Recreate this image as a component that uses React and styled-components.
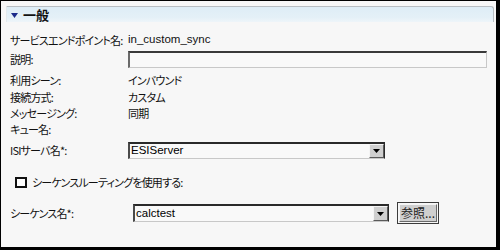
import React from "react";
import styled, { createGlobalStyle } from "styled-components";

const Global = createGlobalStyle`
  html, body { margin: 0; padding: 0; background: #f7f7f7; }
  body { font-family: "Noto Sans CJK JP", "Liberation Sans", sans-serif; }
  * { box-sizing: border-box; }
`;

const Frame = styled.div`
  width: 500px;
  height: 250px;
  background: #f7f7f7;
  border-style: solid;
  border-color: #000;
  border-width: 1px 4px 3px 1px;
  padding: 5px 2px 0 5px;
  display: flex;
  flex-direction: column;
  font-size: 11px;
  color: #111;
  font-feature-settings: "palt";
  line-height: 1;
`;

const Header = styled.div`
  height: 16px;
  display: flex;
  align-items: center;
  gap: 5px;
  padding-left: 4px;
  background: linear-gradient(#deedf6, #e4f0f7 70%, #eef5f9);
  border-top: 1px solid #b9bec2;
  border-right: 1px solid #b9bec2;
  border-left: 1px solid #e3e9ec;
  border-top-right-radius: 3px;
  font-weight: bold;
  font-size: 13px;
  color: #111;
`;

const Tri = styled.svg`
  width: 7px;
  height: 5px;
  display: block;
  margin-top: 1px;
`;

const Body = styled.div`
  display: flex;
  flex-direction: column;
  padding-left: 4px;
`;

const Row = styled.div`
  display: flex;
  align-items: center;
  height: ${(p) => p.$h || 16}px;
  margin-top: ${(p) => p.$mt || 0}px;
`;

const Label = styled.div`
  width: ${(p) => p.$w || 118}px;
  flex: none;
  white-space: nowrap;
  letter-spacing: -0.8px;
`;

const Value = styled.div`
  font-family: ${(p) => (p.$latin ? '"Liberation Sans", sans-serif' : '"Noto Sans CJK JP", sans-serif')};
  font-size: ${(p) => (p.$latin ? "11.5px" : "11px")};
  letter-spacing: ${(p) => (p.$latin ? "0" : "-0.8px")};
  white-space: nowrap;
`;

const TextInput = styled.div`
  width: 359px;
  height: 17px;
  background: #f9f9f9;
  border-style: solid;
  border-width: 2px 1px 1px 2px;
  border-color: #3a3a3a #c8c8c8 #c8c8c8 #6a6a6a;
`;

const Select = styled.div`
  width: ${(p) => p.$w}px;
  height: ${(p) => p.$hh || 17}px;
  display: flex;
  background: #f9f9f9;
  border-style: solid;
  border-width: 2px 1px 1px 2px;
  border-color: #2a2a2a #2a2a2a #c8c8c8 #4a4a4a;
`;

const SelectText = styled.div`
  flex: 1;
  padding-left: 1px;
  display: flex;
  align-items: center;
  font-family: "Liberation Sans", sans-serif;
  font-size: 11.5px;
  color: #000;
`;

const Arrow = styled.div`
  width: 15px;
  flex: none;
  background: #cfcfcf;
  border-style: solid;
  border-width: 1px;
  border-color: #f4f4f4 #5a5a5a #5a5a5a #f4f4f4;
  display: flex;
  align-items: center;
  justify-content: center;
`;

const Check = styled.div`
  width: 12px;
  height: 11px;
  border: 2px solid #111;
  background: #fff;
  margin-left: 5px;
  margin-right: 5px;
  flex: none;
`;

const Button = styled.div`
  margin-left: 8px;
  width: 42px;
  height: 22px;
  border: 1px solid #3c3c3c;
  padding: 1px;
  display: flex;
`;

const ButtonFace = styled.div`
  flex: 1;
  background: #cfcfcf;
  border-style: solid;
  border-width: 1px;
  border-color: #f4f4f4 #6a6a6a #6a6a6a #f4f4f4;
  display: flex;
  align-items: center;
  justify-content: center;
  font-size: 12px;
  color: #222;
  padding-bottom: 1px;
`;

const DownIcon = () => (
  <svg width="7" height="4" viewBox="0 0 7 4">
    <path d="M0 0H7L3.5 4Z" fill="#000" />
  </svg>
);

export default function App() {
  return (
    <>
      <Global />
      <Frame>
        <Header>
          <Tri viewBox="0 0 7 5">
            <path d="M0 0H7L3.5 5Z" fill="#1b2a8a" />
          </Tri>
          <span>一般</span>
        </Header>
        <Body>
          <Row $mt={10}>
            <Label>サービスエンドポイント名:</Label>
            <Value $latin>in_custom_sync</Value>
          </Row>
          <Row $mt={3} $h={17}>
            <Label>説明:</Label>
            <TextInput />
          </Row>
          <Row $mt={4}>
            <Label>利用シーン:</Label>
            <Value>インバウンド</Value>
          </Row>
          <Row $mt={1}>
            <Label>接続方式:</Label>
            <Value>カスタム</Value>
          </Row>
          <Row>
            <Label>メッセージング:</Label>
            <Value>同期</Value>
          </Row>
          <Row>
            <Label>キュー名:</Label>
          </Row>
          <Row $mt={5} $h={17}>
            <Label>ISIサーバ名*:</Label>
            <Select $w={257}>
              <SelectText>ESIServer</SelectText>
              <Arrow>
                <DownIcon />
              </Arrow>
            </Select>
          </Row>
          <Row $mt={15}>
            <Check />
            <Label>シーケンスルーティングを使用する:</Label>
          </Row>
          <Row $mt={12} $h={22}>
            <Label $w={123}>シーケンス名*:</Label>
            <Select $w={256} $hh={18}>
              <SelectText>calctest</SelectText>
              <Arrow>
                <DownIcon />
              </Arrow>
            </Select>
            <Button>
              <ButtonFace>参照...</ButtonFace>
            </Button>
          </Row>
        </Body>
      </Frame>
    </>
  );
}
